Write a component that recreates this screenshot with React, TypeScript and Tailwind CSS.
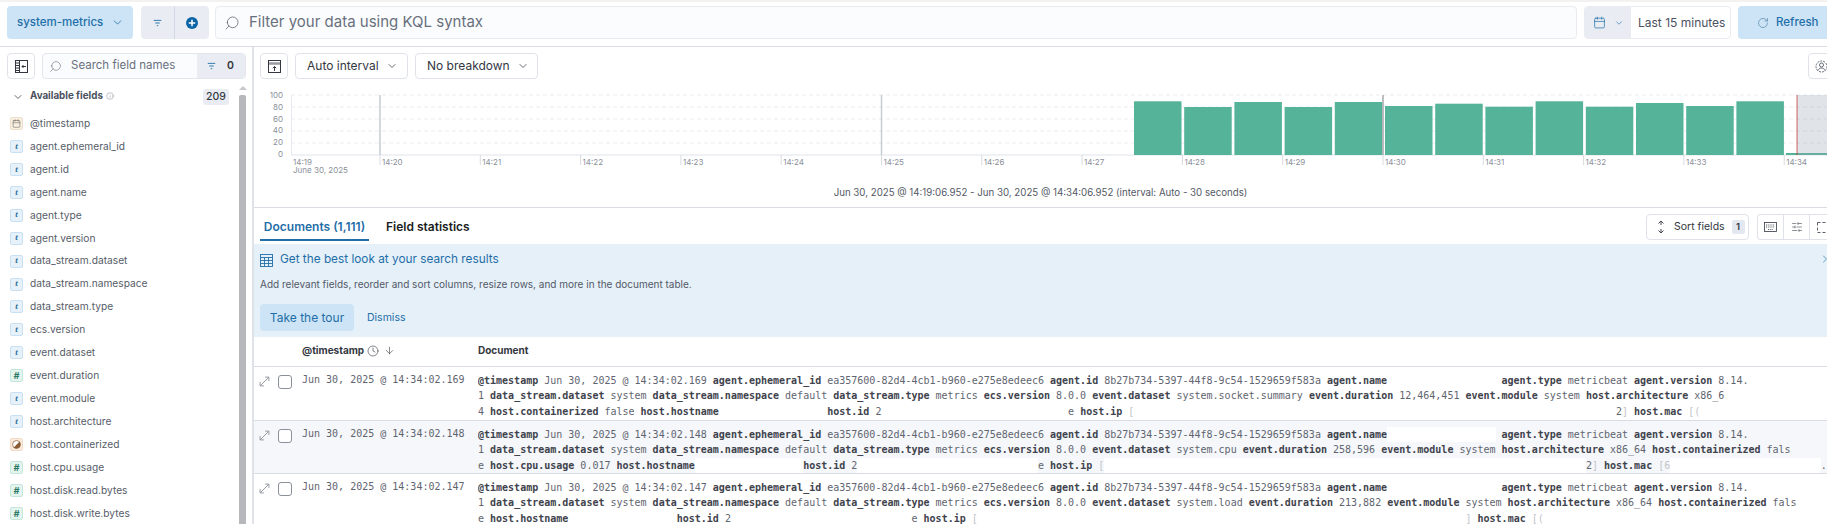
import React from "react";
import { ChevronDown, ChevronRight, Search, RotateCw, Calendar, ArrowDown, Clock, SlidersHorizontal, Info } from "lucide-react";

const blue = "#1f6ea8";
const monoFont = "font-['DejaVu_Sans_Mono',monospace]";

const FilterLines = ({ c = "#1f6ea8" }: { c?: string }) => (
  <svg width="9" height="8" viewBox="0 0 12 10" fill="none" stroke={c} strokeWidth="1.2">
    <path d="M1 1.5h10M3 5h6M5 8.5h2" />
  </svg>
);

type Seg = { t: string; k: "b" | "n" | "g" | "w" | "l" };
const B = (t: string): Seg => ({ t, k: "b" });
const T = (t: string): Seg => ({ t, k: "n" });
const L = (t: string): Seg => ({ t, k: "l" });
const G = (n: number): Seg => ({ t: " ".repeat(n), k: "g" });
const W = (n: number): Seg => ({ t: " ".repeat(n), k: "w" });

function Line({ segs }: { segs: Seg[] }) {
  return (
    <div className={`h-[15.5px] leading-[15.5px] whitespace-pre text-[10px] ${monoFont}`}>
      {segs.map((s, i) => {
        if (s.k === "b") return <span key={i} className="font-bold text-[#3f434d]">{s.t}</span>;
        if (s.k === "n") return <span key={i} className="text-[#5f6570]">{s.t}</span>;
        if (s.k === "l") return <span key={i} className="text-[#c2c5cb]">{s.t}</span>;
        if (s.k === "w") return <span key={i} className="inline-block h-[15.5px] align-top bg-white">{s.t}</span>;
        return <span key={i}>{s.t}</span>;
      })}
    </div>
  );
}

const head = (ts: string): Seg[] => [
  B("@timestamp"), T(` Jun 30, 2025 @ 14:34:02.${ts} `), B("agent.ephemeral_id"), T(" ea357600-82d4-4cb1-b960-e275e8edeec6 "),
  B("agent.id"), T(" 8b27b734-5397-44f8-9c54-1529659f583a "), B("agent.name"),
];
const tail: Seg[] = [B("agent.type"), T(" metricbeat "), B("agent.version"), T(" 8.14.")];
const mid: Seg[] = [
  T("1 "), B("data_stream.dataset"), T(" system "), B("data_stream.namespace"), T(" default "), B("data_stream.type"),
  T(" metrics "), B("ecs.version"), T(" 8.0.0 "), B("event.dataset"),
];

const rows: { ts: string; bg: string; h: string; lines: Seg[][] }[] = [
  {
    ts: "169", bg: "", h: "h-[54px] pt-[5.5px]",
    lines: [
      [...head("169"), G(19), ...tail],
      [...mid, T(" system.socket.summary "), B("event.duration"), T(" 12,464,451 "), B("event.module"), T(" system "), B("host.architecture"), T(" x86_6")],
      [T("4 "), B("host.containerized"), T(" false "), B("host.hostname"), G(18), B("host.id"), T(" 2"), G(31), T("e "), B("host.ip"), T(" "), L("["), G(80), T("2"), L("]"), T(" "), B("host.mac"), T(" "), L("[(")],
    ],
  },
  {
    ts: "148", bg: "bg-[#f5f7fa]", h: "h-[53px] pt-[5.5px]",
    lines: [
      [...head("148"), W(18), G(1), ...tail],
      [...mid, T(" system.cpu "), B("event.duration"), T(" 258,596 "), B("event.module"), T(" system "), B("host.architecture"), T(" x86_64 "), B("host.containerized"), T(" fals")],
      [T("e "), B("host.cpu.usage"), T(" 0.017 "), B("host.hostname"), W(18), B("host.id"), T(" 2"), W(30), T("e "), B("host.ip"), T(" "), L("["), W(80), T("2"), L("]"), T(" "), B("host.mac"), T(" "), L("[6"), W(25), T(".")],
    ],
  },
  {
    ts: "147", bg: "", h: "h-[60px] pt-[5.5px]",
    lines: [
      [...head("147"), G(19), ...tail],
      [...mid, T(" system.load "), B("event.duration"), T(" 213,882 "), B("event.module"), T(" system "), B("host.architecture"), T(" x86_64 "), B("host.containerized"), T(" fals")],
      [T("e "), B("host.hostname"), G(18), B("host.id"), T(" 2"), G(30), T("e "), B("host.ip"), T(" "), L("["), G(81), L("]"), T(" "), B("host.mac"), T(" "), L("[(")],
    ],
  },
];

type FT = "t" | "n" | "d" | "b";
const fields: [string, FT][] = [
  ["@timestamp", "d"], ["agent.ephemeral_id", "t"], ["agent.id", "t"], ["agent.name", "t"], ["agent.type", "t"], ["agent.version", "t"],
  ["data_stream.dataset", "t"], ["data_stream.namespace", "t"], ["data_stream.type", "t"], ["ecs.version", "t"], ["event.dataset", "t"],
  ["event.duration", "n"], ["event.module", "t"], ["host.architecture", "t"], ["host.containerized", "b"], ["host.cpu.usage", "n"],
  ["host.disk.read.bytes", "n"], ["host.disk.write.bytes", "n"],
];

function FieldIcon({ t }: { t: FT }) {
  if (t === "t")
    return <span className="w-[13px] h-[13px] rounded-[2px] bg-[#e6f1fa] border border-[#c8e0f2] flex items-center justify-center text-[9px] italic font-bold text-[#2a6d9c] font-['Liberation_Serif',serif]">t</span>;
  if (t === "n")
    return <span className="w-[13px] h-[13px] rounded-[2px] bg-[#e4f4ef] border border-[#c5e6dc] flex items-center justify-center text-[9px] italic font-bold text-[#2c7a63]">#</span>;
  if (t === "d")
    return (
      <span className="w-[13px] h-[13px] rounded-[2px] bg-[#f8f0e3] border border-[#eee0c8] flex items-center justify-center">
        <Calendar size={9} color="#6b6658" strokeWidth={1.5} />
      </span>
    );
  return (
    <span className="w-[13px] h-[13px] rounded-[2px] bg-[#fbebdd] border border-[#f2dcc8] flex items-center justify-center">
      <svg width="9" height="9" viewBox="0 0 10 10">
        <circle cx="5" cy="5" r="4.4" fill="#fff" stroke="#8a5a33" strokeWidth="0.8" />
        <path d="M9.4 5A4.4 4.4 0 0 1 2 8.2L8.2 2A4.4 4.4 0 0 1 9.4 5Z" fill="#8a5a33" />
      </svg>
    </span>
  );
}

function Chart() {
  const tops = [101.3, 107, 102, 107, 102, 106, 103.7, 106.7, 101.3, 106.7, 103, 106, 101.3];
  const oy = 90;
  const ox = 254;
  const X = (v: number) => v - ox;
  const Y = (v: number) => v - oy;
  const tick = (i: number) => 380 + 100.3 * i;
  return (
    <svg width="1573" height="90" className="block">
      {[95, 107, 119, 131, 143].map((y) => (
        <line key={y} x1={X(291)} x2={1573} y1={Y(y)} y2={Y(y)} stroke="#e9ecf1" strokeDasharray="4 3" />
      ))}
      <line x1={X(291.5)} x2={X(291.5)} y1={Y(95)} y2={Y(155)} stroke="#e6e9ee" />
      <line x1={X(291)} x2={1573} y1={Y(155)} y2={Y(155)} stroke="#dfe3e9" />
      {tops.map((t, i) => (
        <rect key={i} x={X(1134 + 50.2 * i)} y={Y(t)} width={47.5} height={155 - t} fill="#54b399" />
      ))}
      <rect x={X(1786)} y={Y(153)} width={47} height={2} fill="#54b399" />
      <rect x={X(1797)} y={Y(95)} width={40} height={60} fill="#98a2b3" fillOpacity="0.3" />
      <line x1={X(1797)} x2={X(1797)} y1={Y(95)} y2={Y(155)} stroke="#bd271e" strokeOpacity="0.7" />
      {[0, 5, 10].map((i) => (
        <line key={i} x1={X(tick(i))} x2={X(tick(i))} y1={Y(95)} y2={Y(155)} stroke={i === 10 ? "#a6a8ab" : "#c9ccd1"} strokeWidth="1.5" />
      ))}
      {["100", "80", "60", "40", "20", "0"].map((s, i) => (
        <text key={s} x={X(283)} y={Y(98 + i * 11.8)} textAnchor="end" fontSize="8" fontFamily="Inter" fill="#8b909a">{s}</text>
      ))}
      <text x={X(293)} y={Y(165)} fontSize="8" fontFamily="Inter" fill="#8b909a">14:19</text>
      <text x={X(293)} y={Y(173)} fontSize="8" fontFamily="Inter" fill="#8b909a">June 30, 2025</text>
      {Array.from({ length: 15 }, (_, i) => i).map((i) => (
        <g key={i}>
          <line x1={X(tick(i))} x2={X(tick(i))} y1={Y(155)} y2={Y(165)} stroke="#d8dbe0" />
          <text x={X(tick(i) + 2)} y={Y(165)} fontSize="8" fontFamily="Inter" fill="#8b909a">{`14:${20 + i}`}</text>
        </g>
      ))}
    </svg>
  );
}

export default function App() {
  return (
    <div className="w-[1827px] h-[524px] overflow-hidden bg-white font-['Inter',sans-serif] text-[#343741]">
      {/* Top bar */}
      <div className="h-[47px] border-t-[2px] border-t-[#f4f2f0] border-b border-b-[#d9dde3] flex items-start pt-[4px] pl-[7px]">
        <button className="w-[126px] h-[33px] shrink-0 rounded-[4px] bg-[#cce4f5] flex items-center pl-[10px] gap-[8px] text-[11.5px] font-medium" style={{ color: blue }}>
          system-metrics
          <ChevronDown size={13} strokeWidth={1.5} />
        </button>
        <div className="ml-[8px] w-[68px] h-[33px] shrink-0 rounded-[4px] bg-[#e9edf3] flex">
          <div className="w-[34px] flex items-center justify-center border-r border-[#d3dae6]">
            <FilterLines />
          </div>
          <div className="flex-1 flex items-center justify-center">
            <svg width="14" height="14" viewBox="0 0 14 14">
              <circle cx="7" cy="7" r="6" fill="#0b64a5" />
              <path d="M7 3.8v6.4M3.8 7h6.4" stroke="#fff" strokeWidth="1.5" />
            </svg>
          </div>
        </div>
        <div className="ml-[6px] w-[1362px] h-[33px] shrink-0 rounded-[4px] border border-[#e8ebf0] bg-[#fbfcfd] flex items-center pl-[8px] gap-[9px] text-[15px] text-[#69707d]">
          <Search size={16} strokeWidth={1.1} className="-scale-x-100" color="#535966" />
          Filter your data using KQL syntax
        </div>
        <div className="ml-[7px] w-[147px] h-[33px] shrink-0 rounded-[4px] border border-[#e8ebf0] flex overflow-hidden">
          <div className="w-[46px] bg-[#e9edf3] flex items-center justify-center gap-[8px]">
            <Calendar size={13} strokeWidth={1.3} color={blue} />
            <ChevronDown size={10} strokeWidth={1.5} color={blue} />
          </div>
          <div className="flex-1 flex items-center pl-[7px] text-[12px] text-[#4b5160]">Last 15 minutes</div>
        </div>
        <button className="ml-[7px] w-[100px] h-[33px] rounded-l-[4px] bg-[#cce4f5] flex items-center pl-[19px] gap-[7px] text-[11.5px] font-medium shrink-0" style={{ color: blue }}>
          <RotateCw size={12} strokeWidth={1.3} color="#4f7fa5" />
          Refresh
        </button>
      </div>

      <div className="flex h-[477px]">
        {/* Sidebar */}
        <div className="w-[252px] shrink-0 pl-[7px] pt-[6px]">
          <div className="flex h-[27px] w-[239px]">
            <div className="w-[28px] h-[26px] rounded-[4px] border border-[#dfe3e9] flex items-center justify-center">
              <svg width="13" height="13" viewBox="0 0 13 13" fill="none" stroke="#343741" strokeWidth="1">
                <rect x="0.5" y="0.5" width="12" height="12" />
                <path d="M4.5 0.5v12" />
                <path d="M0.5 3h4M0.5 5.5h4M0.5 8h4M0.5 10.5h4" />
                <path d="M11 6.5H7M8.5 5 7 6.5 8.5 8" />
              </svg>
            </div>
            <div className="ml-[7px] w-[204px] h-[26px] shrink-0 rounded-[4px] border border-[#e3e6ec] bg-[#fbfcfd] flex items-center overflow-hidden">
              <Search size={13} strokeWidth={1.1} className="ml-[6px] -scale-x-100" color="#69707d" />
              <span className="ml-[9px] text-[11.5px] text-[#69707d] w-[126px] shrink-0">Search field names</span>
              <div className="flex-1 h-full bg-[#e9edf3] flex items-center pl-[10px] gap-[11px]">
                <FilterLines />
                <span className="text-[10.5px] font-semibold text-[#343741]">0</span>
              </div>
            </div>
          </div>
          <div className="flex">
            <div className="w-[232px]">
              <div className="h-[26px] mt-[3px] flex items-center pl-[5px] pt-[1px]">
                <ChevronDown size={12} strokeWidth={1.5} color="#343741" />
                <span className="ml-[6px] text-[9.8px] font-bold text-[#4b5160]">Available fields</span>
                <Info size={8} strokeWidth={1.2} className="ml-[3px] mb-[2px]" color="#69707d" />
                <span className="ml-auto mr-[10px] w-[26px] h-[16px] rounded-[3px] bg-[#e9edf3] flex items-center justify-center text-[10.5px] font-medium text-[#343741]">209</span>
              </div>
              <div className="pt-[3px] pl-[3px]">
                {fields.map(([n, t]) => (
                  <div key={n} className="h-[22.95px] flex items-center gap-[7px] text-[10.2px] text-[#565c68]">
                    <FieldIcon t={t} />
                    {n}
                  </div>
                ))}
              </div>
            </div>
            <div className="w-[7px] flex flex-col items-center pt-[6px]">
              <div className="w-0 h-0 border-l-[4px] border-r-[4px] border-b-[4px] border-l-transparent border-r-transparent border-b-[#c6c8cb]" />
              <div className="mt-[5px] w-[7px] h-[440px] rounded-t-[2px] bg-[#b6b8bc]" />
            </div>
          </div>
        </div>

        {/* Main */}
        <div className="flex-1 min-w-0 border-l-[2px] border-l-[#dfe3e9] overflow-hidden">
          <div className="h-[39px] pt-[6px] pl-[6px] flex items-start gap-[7px] relative">
            <div className="w-[28px] h-[26px] rounded-[4px] border border-[#dfe3e9] flex items-center justify-center">
              <svg width="13" height="13" viewBox="0 0 13 13" fill="none" stroke="#343741" strokeWidth="1">
                <rect x="0.5" y="0.5" width="12" height="12" />
                <path d="M0.5 3.5h12" strokeWidth="2.5" strokeDasharray="1 1" />
                <path d="M6.5 11V6.5M4.8 8.2l1.7-1.7 1.7 1.7" />
              </svg>
            </div>
            <div className="w-[113px] h-[26px] rounded-[4px] border border-[#dfe3e9] flex items-center pl-[11px] gap-[7px] text-[12px] text-[#343741]">
              Auto interval <ChevronDown size={12} strokeWidth={1.5} />
            </div>
            <div className="w-[123px] h-[26px] rounded-[4px] border border-[#dfe3e9] flex items-center pl-[11px] gap-[7px] text-[12px] text-[#343741]">
              No breakdown <ChevronDown size={12} strokeWidth={1.5} />
            </div>
            <div className="absolute left-[1554px] top-[6px] w-[30px] h-[26px] rounded-[4px] border border-[#dfe3e9] flex items-center pl-[6px]">
              <svg width="13" height="13" viewBox="0 0 13 13" fill="none" stroke="#535966" strokeWidth="0.9">
                <circle cx="6.5" cy="6.5" r="5.5" strokeDasharray="2 1" />
                <circle cx="6.5" cy="5" r="2" />
                <path d="M3 10.5c1-2 2-2.5 3.5-2.5S9 8.500 10 10.500" />
              </svg>
            </div>
          </div>
          <div className="h-[90px] mt-[4px]"><Chart /></div>
          <div className="h-[27px] text-center text-[9.7px] leading-[14px] text-[#535966] pt-[6px]">
            <div className="w-[1573px]">Jun 30, 2025 @ 14:19:06.952 - Jun 30, 2025 @ 14:34:06.952 (interval: Auto - 30 seconds)</div>
          </div>

          <div className="border-t border-[#d9dde3] h-[37px] flex pl-[6px] relative">
            <div className="w-[109px] h-[33px] pt-[6px] border-b-[2px] border-[#1f6ea8] flex items-center justify-center text-[12px] font-semibold" style={{ color: blue }}>
              Documents (1,111)
            </div>
            <div className="ml-[17px] h-[33px] pt-[6px] pb-[2px] flex items-center text-[12px] font-semibold text-[#1a1c21]">Field statistics</div>
            <div className="ml-auto mt-[6px] flex">
              <div className="w-[103px] h-[26px] rounded-[4px] border border-[#dfe3e9] flex items-center pl-[8px] text-[10.5px] text-[#343741]">
                <svg width="12" height="14" viewBox="0 0 12 14" fill="none" stroke="#343741" strokeWidth="0.9">
                  <path d="M6 1v4M6 9v4M3.500 3.500 6 1l2.500 2.500M3.500 10.500 6 13l2.500-2.500" />
                </svg>
                <span className="ml-[7px]">Sort fields</span>
                <span className="ml-[7px] w-[13px] h-[14px] rounded-[2px] bg-[#e3e8f0] flex items-center justify-center text-[9.5px] font-semibold">1</span>
              </div>
              <div className="ml-[8px] w-[70px] h-[26px] rounded-l-[4px] border border-r-0 border-[#dfe3e9] flex">
                <div className="w-[27px] flex items-center justify-center border-r border-[#dfe3e9]">
                  <svg width="13" height="10" viewBox="0 0 13 10" fill="none" stroke="#343741" strokeWidth="0.8">
                    <rect x="0.5" y="0.5" width="12" height="9" />
                    <path d="M2 3h9M2 5h9M4 7.500h5" strokeDasharray="1 0.8" />
                  </svg>
                </div>
                <div className="w-[26px] flex items-center justify-center border-r border-[#dfe3e9]">
                  <SlidersHorizontal size={12} strokeWidth={1.1} color="#343741" />
                </div>
                <div className="flex-1 flex items-center pl-[7px]">
                  <svg width="10" height="11" viewBox="0 0 10 11" fill="none" stroke="#343741" strokeWidth="0.8">
                    <rect x="0.500" y="0.500" width="14" height="10" strokeDasharray="3 2" />
                  </svg>
                </div>
              </div>
            </div>
          </div>

          <div className="h-[93px] bg-[#e5f0f9] pl-[6px] relative">
            <div className="h-[31px] flex items-center gap-[7px] text-[11.8px] pt-[1px]" style={{ color: blue }}>
              <svg width="13" height="13" viewBox="0 0 13 13" fill="none" stroke={blue} strokeWidth="0.9">
                <rect x="0.500" y="0.500" width="12" height="12" />
                <path d="M0.500 3.500h12M0.500 6.500h12M0.500 9.500h12M4.500 3.500v9M8.500 3.500v9" />
              </svg>
              Get the best look at your search results
            </div>
            <div className="text-[10px] leading-[14px] mt-[2px] text-[#535966]">Add relevant fields, reorder and sort columns, resize rows, and more in the document table.</div>
            <div className="flex items-center mt-[13px]">
              <div className="w-[94px] h-[27px] rounded-[4px] bg-[#cce4f5] flex items-center justify-center text-[12px]" style={{ color: blue }}>Take the tour</div>
              <div className="ml-[13px] text-[10.500px]" style={{ color: blue }}>Dismiss</div>
            </div>
            <ChevronRight size={12} strokeWidth={1.3} color={blue} className="absolute left-[1565px] top-[9px]" />
          </div>

          <div className="h-[30px] border-b border-[#d9dde3] flex items-center text-[10px] font-bold text-[#343741] pb-[2px]">
            <div className="ml-[48px] w-[176px] flex items-center">
              @timestamp
              <Clock size={12} strokeWidth={1.2} className="ml-[3px]" />
              <ArrowDown size={11} strokeWidth={1.3} className="ml-[5px]" />
            </div>
            <div>Document</div>
          </div>

          {rows.map((r) => (
            <div key={r.ts} className={`${r.h} ${r.bg} border-b border-[#d9dde3] flex`}>
              <div className="w-[48px] shrink-0 flex items-start pl-[5px] pt-[2px]">
                <svg width="11" height="11" viewBox="0 0 10 10" fill="none" stroke="#8a8f99" strokeWidth="0.8" className="mt-[1px]">
                  <path d="M1 9 9 1M5.500 1H9v3.500M1 5.500V9h3.500" />
                </svg>
                <span className="ml-[8px] w-[14px] h-[14px] rounded-[3px] border border-[#8b909a] bg-white" />
              </div>
              <div className={`w-[176px] shrink-0 text-[10px] leading-[15.500px] text-[#5f6570] whitespace-pre ${monoFont} -mt-[0.5px]`}>{`Jun 30, 2025 @ 14:34:02.${r.ts}`}</div>
              <div className="flex-1 min-w-0 overflow-hidden">
                {r.lines.map((l, i) => <Line key={i} segs={l} />)}
              </div>
            </div>
          ))}
        </div>
      </div>
    </div>
  );
}
